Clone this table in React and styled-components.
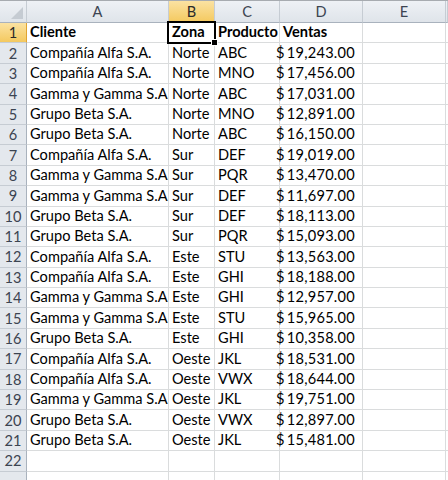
import React from 'react'
import styled, { createGlobalStyle, css } from 'styled-components'

const GlobalStyle = createGlobalStyle`
	html, body {
		margin: 0;
		padding: 0;
		background: #ffffff;
		overflow: hidden;
	}
	body {
		font-family: 'Lato', 'Liberation Sans', sans-serif;
		font-size: 14.6px;
		color: #000000;
	}
`

const COLS = '27px 142px 46px 65px 83px 83px 1fr'

const Sheet = styled.div`
	width: 448px;
	height: 480px;
	overflow: hidden;
	border-top: 1px solid #a7abb0;
	box-sizing: border-box;
`

const Row = styled.div`
	display: grid;
	grid-template-columns: ${COLS};
	height: ${(p) => (p.$head ? '22px' : '20.4px')};
`

const HeadCell = styled.div`
	display: flex;
	align-items: center;
	justify-content: center;
	box-sizing: border-box;
	border-right: 1px solid #c6ccd3;
	border-bottom: 1px solid #a9b2bd;
	background: linear-gradient(#eef1f5, #dfe4ea);
	color: #3c4451;
	${(p) =>
		p.$active &&
		css`
			background: linear-gradient(#fbe2a2, #f4c95f);
			border-bottom-color: #e0a431;
			color: #2a2a2a;
		`}
`

const Corner = styled(HeadCell)`
	position: relative;
	&::after {
		content: '';
		position: absolute;
		right: 3px;
		bottom: 3px;
		border-style: solid;
		border-width: 0 0 12px 12px;
		border-color: transparent transparent #c5cbd2 transparent;
	}
`

const RowNum = styled.div`
	display: flex;
	align-items: center;
	justify-content: center;
	box-sizing: border-box;
	border-right: 1px solid #a9b2bd;
	border-bottom: 1px solid #c6ccd3;
	background: #e4e8ed;
	color: #3c4451;
	${(p) =>
		p.$active &&
		css`
			background: linear-gradient(#fbe2a2, #f4c95f);
			border-right-color: #e0a431;
			color: #2a2a2a;
		`}
`

const Cell = styled.div`
	position: relative;
	display: flex;
	align-items: flex-end;
	justify-content: ${(p) => (p.$right ? 'flex-end' : 'flex-start')};
	box-sizing: border-box;
	padding: 0 ${(p) => (p.$right ? '7px' : '2px')} 1px 3px;
	border-right: 1px solid #dadcdd;
	border-bottom: 1px solid #dadcdd;
	font-weight: ${(p) => (p.$bold ? 700 : 400)};
	letter-spacing: ${(p) => (p.$right ? '0.25px' : '0')};
	white-space: nowrap;
	overflow: visible;
	line-height: 18px;
`

const Dollar = styled.span`
	margin-right: 2px;
`

const Selection = styled.div`
	position: absolute;
	left: -2px;
	top: -2px;
	right: -2px;
	bottom: -2px;
	border: 2px solid #000000;
	pointer-events: none;
	z-index: 2;
	&::after {
		content: '';
		position: absolute;
		right: -4px;
		bottom: -4px;
		width: 5px;
		height: 5px;
		background: #000000;
		border: 1px solid #ffffff;
	}
`

const data = [
	['Compañía Alfa S.A.', 'Norte', 'ABC', '19,243.00'],
	['Compañía Alfa S.A.', 'Norte', 'MNO', '17,456.00'],
	['Gamma y Gamma S.A', 'Norte', 'ABC', '17,031.00'],
	['Grupo Beta S.A.', 'Norte', 'MNO', '12,891.00'],
	['Grupo Beta S.A.', 'Norte', 'ABC', '16,150.00'],
	['Compañía Alfa S.A.', 'Sur', 'DEF', '19,019.00'],
	['Gamma y Gamma S.A', 'Sur', 'PQR', '13,470.00'],
	['Gamma y Gamma S.A', 'Sur', 'DEF', '11,697.00'],
	['Grupo Beta S.A.', 'Sur', 'DEF', '18,113.00'],
	['Grupo Beta S.A.', 'Sur', 'PQR', '15,093.00'],
	['Compañía Alfa S.A.', 'Este', 'STU', '13,563.00'],
	['Compañía Alfa S.A.', 'Este', 'GHI', '18,188.00'],
	['Gamma y Gamma S.A', 'Este', 'GHI', '12,957.00'],
	['Gamma y Gamma S.A', 'Este', 'STU', '15,965.00'],
	['Grupo Beta S.A.', 'Este', 'GHI', '10,358.00'],
	['Compañía Alfa S.A.', 'Oeste', 'JKL', '18,531.00'],
	['Compañía Alfa S.A.', 'Oeste', 'VWX', '18,644.00'],
	['Gamma y Gamma S.A', 'Oeste', 'JKL', '19,751.00'],
	['Grupo Beta S.A.', 'Oeste', 'VWX', '12,897.00'],
	['Grupo Beta S.A.', 'Oeste', 'JKL', '15,481.00'],
]

const letters = ['A', 'B', 'C', 'D', 'E', '']

const EmptyRow = ({ label }) => (
	<Row>
		<RowNum>{label}</RowNum>
		<Cell />
		<Cell />
		<Cell />
		<Cell />
		<Cell />
		<Cell />
	</Row>
)

const App = () => {
	return (
		<>
			<GlobalStyle />
			<Sheet>
				<Row $head>
					<Corner />
					{letters.map((l, i) => (
						<HeadCell key={i} $active={l === 'B'}>
							{l}
						</HeadCell>
					))}
				</Row>
				<Row>
					<RowNum $active>1</RowNum>
					<Cell $bold>Cliente</Cell>
					<Cell $bold>
						Zona
						<Selection />
					</Cell>
					<Cell $bold>Producto</Cell>
					<Cell $bold>Ventas</Cell>
					<Cell />
					<Cell />
				</Row>
				{data.map((r, i) => (
					<Row key={i}>
						<RowNum>{i + 2}</RowNum>
						<Cell>{r[0]}</Cell>
						<Cell>{r[1]}</Cell>
						<Cell>{r[2]}</Cell>
						<Cell $right>
							<Dollar>$</Dollar>
							{r[3]}
						</Cell>
						<Cell />
						<Cell />
					</Row>
				))}
				<EmptyRow label="22" />
				<EmptyRow label="" />
			</Sheet>
		</>
	)
}

export default App
